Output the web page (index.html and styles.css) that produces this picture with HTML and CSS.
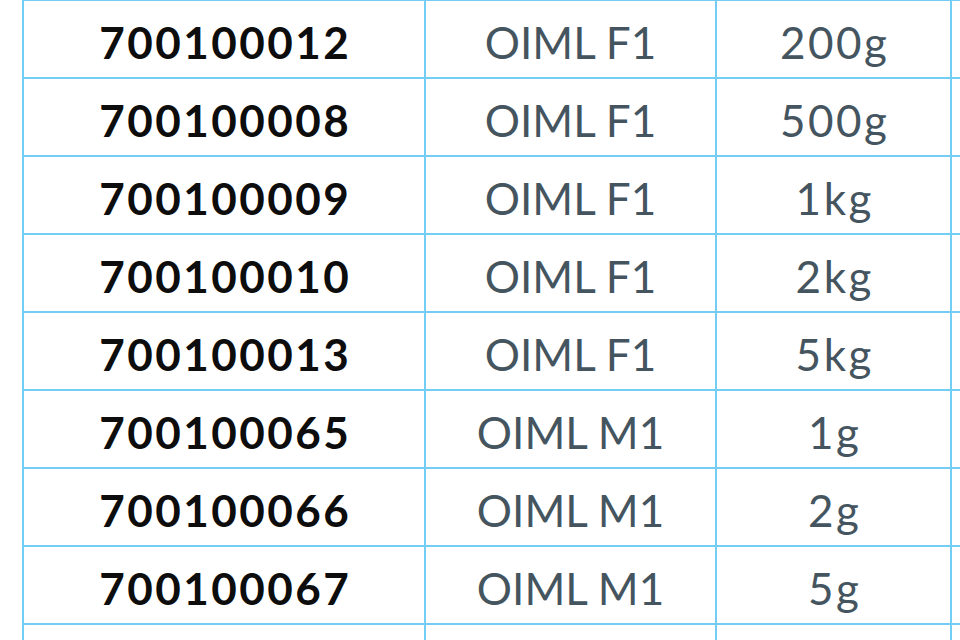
FILE: index.html
```html
<!DOCTYPE html>
<html lang="en">
<head>
<meta charset="utf-8">
<title>Weights</title>
<link rel="stylesheet" href="styles.css">
</head>
<body>
<table class="weights">
  <colgroup>
    <col class="c-code"><col class="c-class"><col class="c-mass"><col class="c-extra">
  </colgroup>
  <tbody>
    <tr><td class="code">700100012</td><td class="cls">OIML F1</td><td class="mass">200g</td><td></td></tr>
    <tr><td class="code">700100008</td><td class="cls">OIML F1</td><td class="mass">500g</td><td></td></tr>
    <tr><td class="code">700100009</td><td class="cls">OIML F1</td><td class="mass">1kg</td><td></td></tr>
    <tr><td class="code">700100010</td><td class="cls">OIML F1</td><td class="mass">2kg</td><td></td></tr>
    <tr><td class="code">700100013</td><td class="cls">OIML F1</td><td class="mass">5kg</td><td></td></tr>
    <tr><td class="code">700100065</td><td class="cls">OIML M1</td><td class="mass">1g</td><td></td></tr>
    <tr><td class="code">700100066</td><td class="cls">OIML M1</td><td class="mass">2g</td><td></td></tr>
    <tr><td class="code">700100067</td><td class="cls">OIML M1</td><td class="mass">5g</td><td></td></tr>
    <tr><td class="code"></td><td class="cls"></td><td class="mass"></td><td></td></tr>
  </tbody>
</table>
</body>
</html>
```
FILE: styles.css
```css
html, body {
  margin: 0;
  padding: 0;
  background: #ffffff;
  overflow: hidden;
}
body {
  font-family: "Lato", "Liberation Sans", sans-serif;
}
.weights {
  border-collapse: collapse;
  table-layout: fixed;
  margin: -1px 0 0 22px;
  width: 1230px;
}
.c-code { width: 402px; }
.c-class { width: 291px; }
.c-mass { width: 235px; }
.c-extra { width: 300px; }
.weights td {
  border: 2px solid #74cdf4;
  height: 78px;
  padding: 5px 0 0 0;
  box-sizing: border-box;
  text-align: center;
  vertical-align: middle;
  font-size: 44px;
  line-height: 1;
}
.weights td.code {
  font-weight: 700;
  color: #0d0d0d;
  letter-spacing: 2.5px;
  text-indent: 2.5px;
}
.weights td.cls,
.weights td.mass {
  font-weight: 400;
  color: #45555f;
}
.weights td.mass {
  letter-spacing: 2.5px;
  text-indent: 2.5px;
}
```
